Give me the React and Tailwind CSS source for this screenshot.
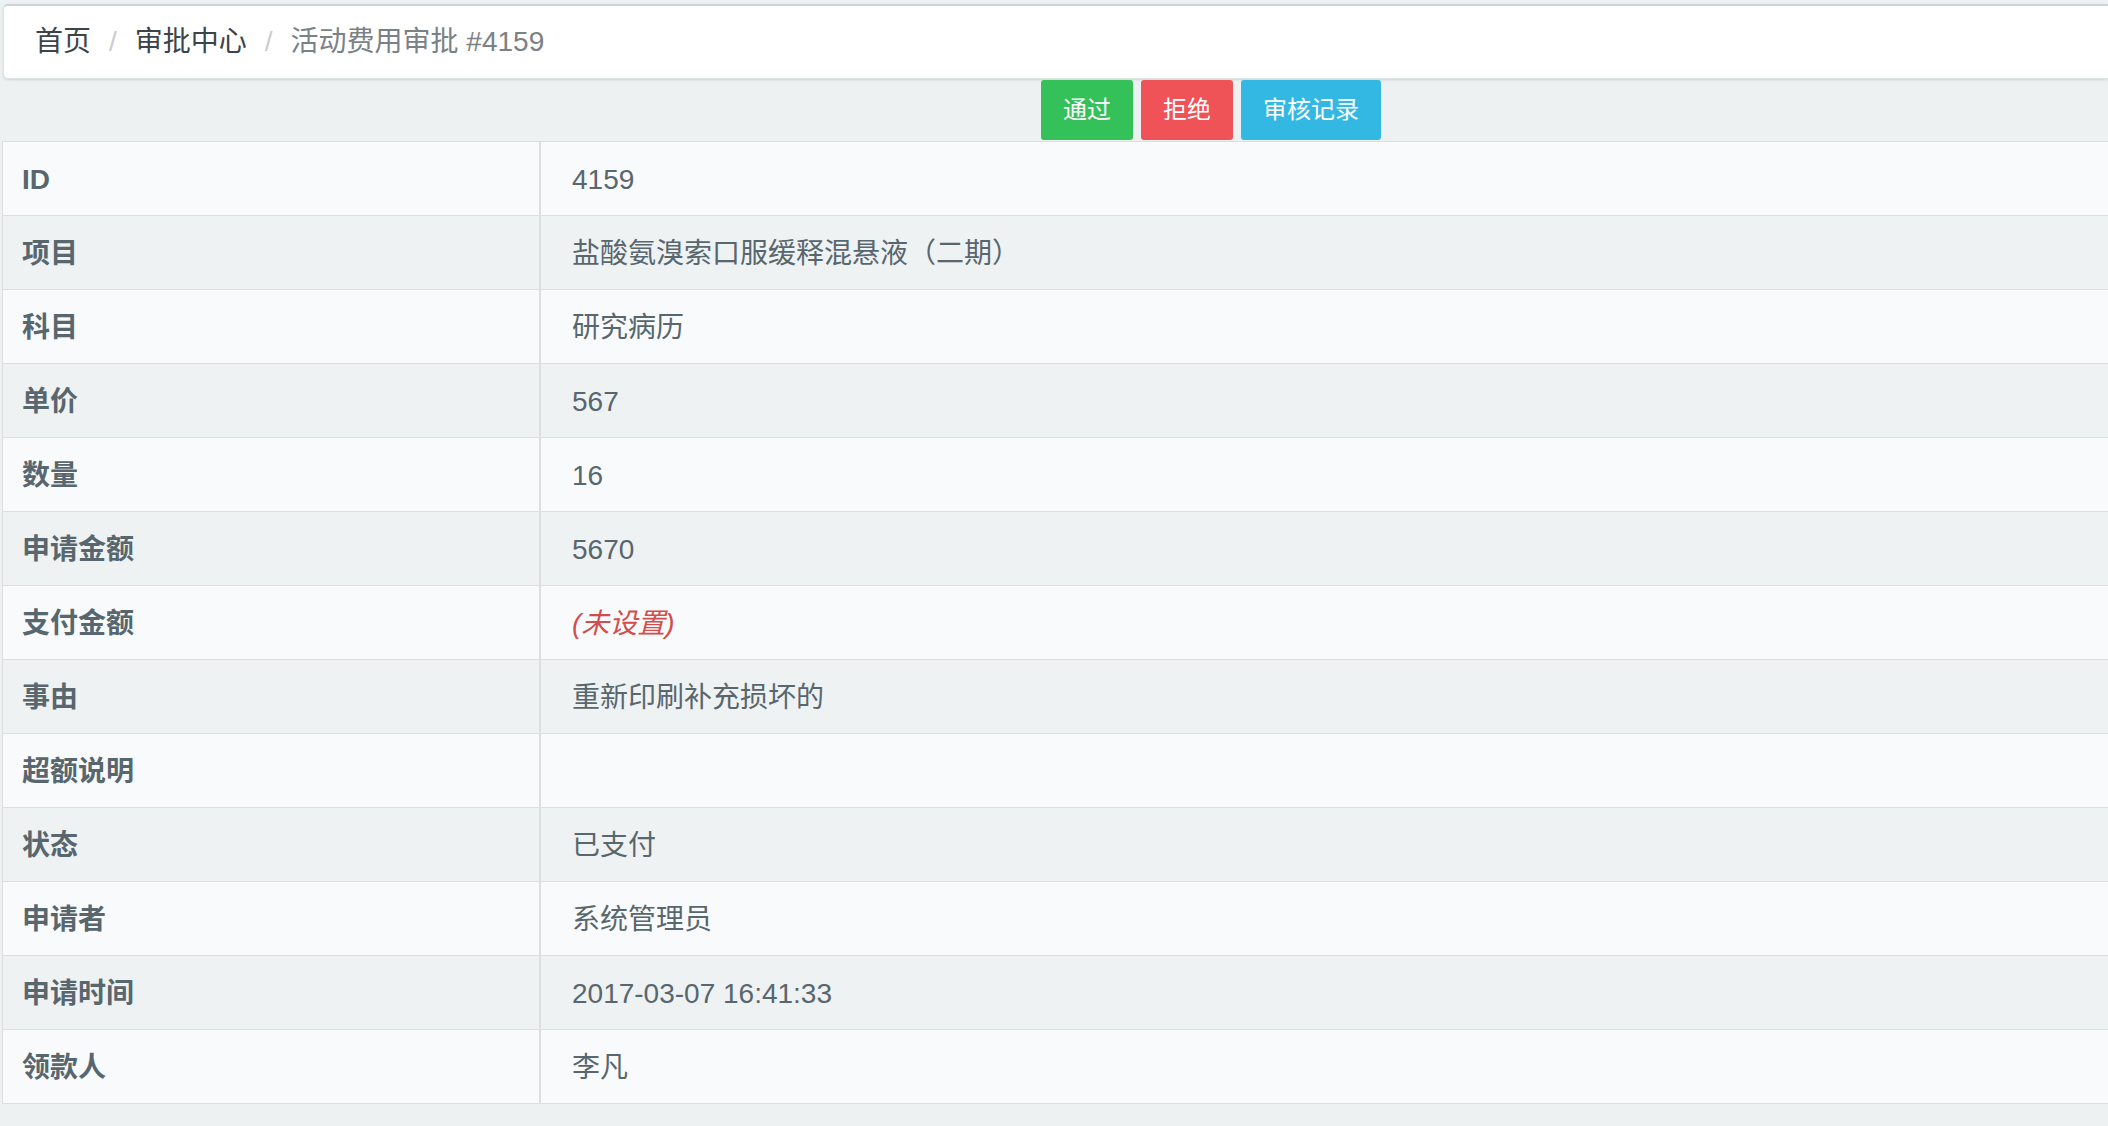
import React from "react";

const rows = [
  { label: "ID", value: "4159" },
  { label: "项目", value: "盐酸氨溴索口服缓释混悬液（二期）" },
  { label: "科目", value: "研究病历" },
  { label: "单价", value: "567" },
  { label: "数量", value: "16" },
  { label: "申请金额", value: "5670" },
  { label: "支付金额", value: null },
  { label: "事由", value: "重新印刷补充损坏的" },
  { label: "超额说明", value: "" },
  { label: "状态", value: "已支付" },
  { label: "申请者", value: "系统管理员" },
  { label: "申请时间", value: "2017-03-07 16:41:33" },
  { label: "领款人", value: "李凡" },
];

export default function App() {
  return (
    <div
      className="min-h-screen w-full overflow-hidden bg-[#edf1f2] text-[#58666e]"
      style={{ fontFamily: '"Liberation Sans", "Noto Sans CJK SC", sans-serif' }}
    >
      {/* Breadcrumb */}
      <div className="pt-[4px]">
        <div className="ml-[3px] flex h-[75px] items-center rounded-tl-[5px] rounded-bl-[5px] border-t-2 border-b border-l border-t-[#cfd3d5] border-b-[#dee5e7] border-l-[#dee5e7] bg-white pl-[31px] text-[28px] shadow-sm">
          <span className="text-[#3d4449]">首页</span>
          <span className="px-[18px] text-[#cccccc]">/</span>
          <span className="text-[#3d4449]">审批中心</span>
          <span className="px-[18px] text-[#cccccc]">/</span>
          <span className="text-[#7a8187]">活动费用审批 #4159</span>
        </div>
      </div>

      {/* Actions */}
      <div className="mt-[1px] flex h-[60px] gap-[8px] pl-[1041px] text-[24px] text-white">
        <button className="w-[92px] rounded-[3px] bg-[#35c15a]">通过</button>
        <button className="w-[92px] rounded-[3px] bg-[#ef5357]">拒绝</button>
        <button className="w-[140px] rounded-[3px] bg-[#32b8e3]">审核记录</button>
      </div>

      {/* Detail table */}
      <div className="ml-[2px] mt-[1px] border-t border-l border-[#dcdfe0] text-[28px]">
        {rows.map((row, i) => (
          <div
            key={row.label}
            className={`flex h-[74px] border-b border-[#dcdfe0] pt-[3px] ${i % 2 === 0 ? "bg-[#f9fafb]" : "bg-[#eff2f3]"}`}
          >
            <div className="-mt-[3px] flex w-[538px] shrink-0 items-center border-r-2 border-[#dcdfe0] pt-[3px] pl-[19px] font-bold">
              {row.label}
            </div>
            <div className="flex flex-1 items-center pl-[31px]">
              {row.value === null ? (
                <span className="italic text-[#d24e4d]">(未设置)</span>
              ) : (
                row.value
              )}
            </div>
          </div>
        ))}
      </div>
    </div>
  );
}
